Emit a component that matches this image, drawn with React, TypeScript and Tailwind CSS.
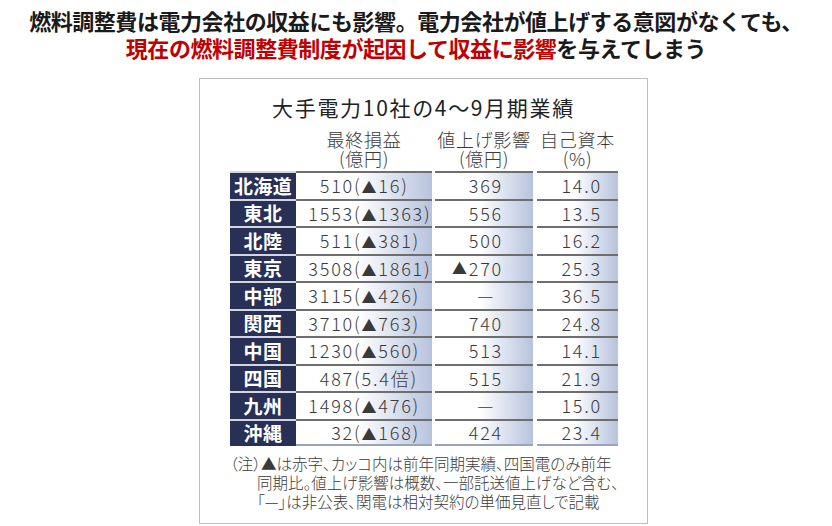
import React from "react";

type Row = {
  name: string;
  num: string;
  paren: string;
  impact: string;
  equity: string;
};

const rows: Row[] = [
  { name: "北海道", num: "510", paren: "▲16", impact: "369", equity: "14.0" },
  { name: "東北", num: "1553", paren: "▲1363", impact: "556", equity: "13.5" },
  { name: "北陸", num: "511", paren: "▲381", impact: "500", equity: "16.2" },
  { name: "東京", num: "3508", paren: "▲1861", impact: "▲270", equity: "25.3" },
  { name: "中部", num: "3115", paren: "▲426", impact: "—", equity: "36.5" },
  { name: "関西", num: "3710", paren: "▲763", impact: "740", equity: "24.8" },
  { name: "中国", num: "1230", paren: "▲560", impact: "513", equity: "14.1" },
  { name: "四国", num: "487", paren: "5.4倍", impact: "515", equity: "21.9" },
  { name: "九州", num: "1498", paren: "▲476", impact: "—", equity: "15.0" },
  { name: "沖縄", num: "32", paren: "▲168", impact: "424", equity: "23.4" },
];

// triangle glyph a touch smaller than the digits
function Tri({ text }: { text: string }) {
  if (!text.startsWith("▲")) return <>{text}</>;
  return (
    <>
      <span className="text-[15px]">▲</span>
      {text.slice(1)}
    </>
  );
}

const cell =
  "h-full border-t-2 border-[#6e6e6e] bg-gradient-to-r from-white via-white via-45% to-[#b7c3dd] flex items-center";

export default function App() {
  return (
    <div
      className="w-[832px] h-[526px] bg-white overflow-hidden text-[#1a1a1a]"
      style={{ fontFamily: '"Noto Sans CJK JP", "Noto Sans", sans-serif' }}
    >
      {/* headline */}
      <div className="pt-[7px] text-center text-[22px] leading-[27px] font-bold tracking-[-0.02em]">
        <p>燃料調整費は電力会社の収益にも影響。電力会社が値上げする意図がなくても、</p>
        <p>
          <span className="text-[#c00000]">現在の燃料調整費制度が起因して収益に影響</span>
          を与えてしまう
        </p>
      </div>

      {/* chart card */}
      <div className="ml-[199px] mt-[17px] w-[449px] h-[446px] border border-[#bdbdbd] text-[#3a3a3a]">
        <h2 className="pt-[14px] text-center text-[21px] leading-[28px] tracking-[0.08em] text-[#222]">
          大手電力10社の4〜9月期業績
        </h2>

        <div className="ml-[30px] w-[388px]">
          {/* column headers */}
          <div className="mt-[9px] flex flex-col gap-0 text-[18px] leading-[19px] font-light tracking-[0.04em]">
            <div className="flex">
              <div className="w-[66px]" />
              <p className="w-[136px] text-center">最終損益</p>
              <p className="ml-[3px] w-[98px] text-center">値上げ影響</p>
              <p className="ml-[4px] w-[81px] text-center">自己資本</p>
            </div>
            <div className="flex">
              <div className="w-[66px]" />
              <p className="w-[136px] text-center">(億円)</p>
              <p className="ml-[3px] w-[98px] text-center">(億円)</p>
              <p className="ml-[4px] w-[81px] text-center">(%)</p>
            </div>
          </div>

          {/* rows */}
          <div className="mt-[3px]">
            {rows.map((r, i) => (
              <div key={r.name} className="flex h-[27.5px] text-[18px] font-light tracking-[0.1em]">
                <div className="w-[66px] h-full border-t-2 border-[#d4d6df] bg-[#283056] text-white font-bold text-[19px] tracking-[0.02em] flex items-center justify-center">
                  {r.name}
                </div>
                <div className={`${cell} w-[136px] ${i === rows.length - 1 ? "border-b-2 border-b-[#9aa3bb]" : ""}`}>
                  <span className="w-[58px] text-right">{r.num}</span>
                  <span>
                    (<Tri text={r.paren} />)
                  </span>
                </div>
                <div
                  className={`${cell} ml-[3px] w-[98px] justify-end pr-[30px] ${i === rows.length - 1 ? "border-b-2 border-b-[#9aa3bb]" : ""}`}
                >
                  {r.impact === "—" ? (
                    <span className="mr-[8px]">—</span>
                  ) : (
                    <Tri text={r.impact} />
                  )}
                </div>
                <div
                  className={`${cell} ml-[4px] w-[81px] justify-end pr-[16px] ${i === rows.length - 1 ? "border-b-2 border-b-[#9aa3bb]" : ""}`}
                >
                  {r.equity}
                </div>
              </div>
            ))}
          </div>

          {/* note */}
          <div className="mt-[8px] text-[15.5px] leading-[19px] font-light [font-feature-settings:'palt'] whitespace-nowrap">
            <p>（注）▲は赤字、カッコ内は前年同期実績、四国電のみ前年</p>
            <p className="pl-[27px]">同期比。値上げ影響は概数、一部託送値上げなど含む、</p>
            <p className="pl-[27px]">「—」は非公表、関電は相対契約の単価見直しで記載</p>
          </div>
        </div>
      </div>
    </div>
  );
}
